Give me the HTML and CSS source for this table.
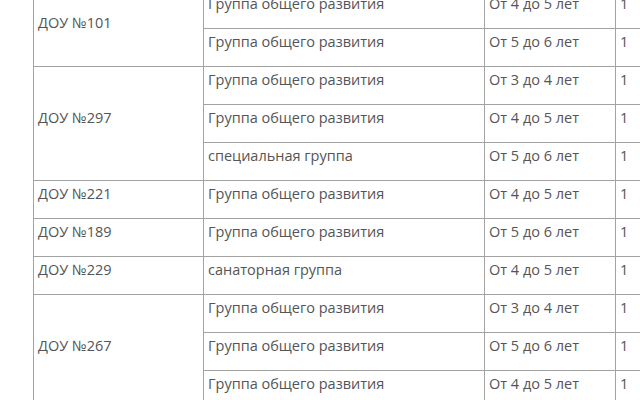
FILE: index.html
```html
<!DOCTYPE html>
<html lang="ru">
<head>
<meta charset="utf-8">
<link rel="stylesheet" href="styles.css">
</head>
<body>
<table class="groups">
  <colgroup>
    <col class="c-dou">
    <col class="c-group">
    <col class="c-age">
    <col class="c-count">
  </colgroup>
  <tbody>
    <tr><td rowspan="2">ДОУ №101</td><td>Группа общего развития</td><td>От 4 до 5 лет</td><td>1</td></tr>
    <tr><td>Группа общего развития</td><td>От 5 до 6 лет</td><td>1</td></tr>
    <tr><td rowspan="3">ДОУ №297</td><td>Группа общего развития</td><td>От 3 до 4 лет</td><td>1</td></tr>
    <tr><td>Группа общего развития</td><td>От 4 до 5 лет</td><td>1</td></tr>
    <tr><td>специальная группа</td><td>От 5 до 6 лет</td><td>1</td></tr>
    <tr><td>ДОУ №221</td><td>Группа общего развития</td><td>От 4 до 5 лет</td><td>1</td></tr>
    <tr><td>ДОУ №189</td><td>Группа общего развития</td><td>От 5 до 6 лет</td><td>1</td></tr>
    <tr><td>ДОУ №229</td><td>санаторная группа</td><td>От 4 до 5 лет</td><td>1</td></tr>
    <tr><td rowspan="3">ДОУ №267</td><td>Группа общего развития</td><td>От 3 до 4 лет</td><td>1</td></tr>
    <tr><td>Группа общего развития</td><td>От 5 до 6 лет</td><td>1</td></tr>
    <tr><td>Группа общего развития</td><td>От 4 до 5 лет</td><td>1</td></tr>
  </tbody>
</table>
</body>
</html>
```
FILE: styles.css
```css
html, body {
  margin: 0;
  padding: 0;
  background: #ffffff;
  overflow: hidden;
}
body {
  font-family: "Open Sans", "Noto Sans", sans-serif;
  font-size: 14.5px;
  color: #555555;
}
.groups {
  border-collapse: collapse;
  table-layout: fixed;
  width: 682px;
  margin: -10px 0 0 33px;
}
.c-dou { width: 170px; }
.c-group { width: 281px; }
.c-age { width: 131px; }
.c-count { width: 100px; }
.groups td {
  border: 1px solid #a3a3a3;
  padding: 3px 5px 14px 4px;
  line-height: 20px;
  vertical-align: middle;
  white-space: nowrap;
}
```
